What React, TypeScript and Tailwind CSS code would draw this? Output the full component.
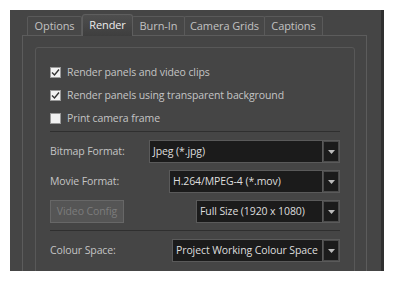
import React from "react";

const font = { fontFamily: '"Open Sans", "Noto Sans", sans-serif', letterSpacing: "-0.1px" };

function Arrow() {
  return (
    <svg width="7" height="4" viewBox="0 0 7 4">
      <polygon points="0,0 7,0 3.5,4" fill="#bdbdbd" />
    </svg>
  );
}

function Combo({ text, w }: { text: string; w: string }) {
  return (
    <div className={`flex h-[23px] ${w} bg-[#5a5a5a] p-[1px] gap-[1px]`}>
      <div className="flex-1 bg-[#1b1b1b] flex items-center pl-[3px] text-[10.5px] text-[#dedede] whitespace-nowrap overflow-hidden">
        {text}
      </div>
      <div className="w-[16px] bg-[#1b1b1b] border border-[#4a4a4a] flex items-center justify-center">
        <Arrow />
      </div>
    </div>
  );
}

function Check({ checked, label }: { checked: boolean; label: string }) {
  return (
    <div className="flex items-center h-[23px] gap-[6px]">
      <div className="w-[11px] h-[11px] bg-[#f2f2f2] border border-[#9a9a9a] flex items-center justify-center">
        {checked && (
          <svg width="9" height="9" viewBox="0 0 9 9">
            <polyline points="1,4.5 3.5,7 8,1.5" fill="none" stroke="#333" strokeWidth="1.4" />
          </svg>
        )}
      </div>
      <span className="text-[10.5px] text-[#c4c4c4] whitespace-nowrap">{label}</span>
    </div>
  );
}

const tabs = [
  { name: "Options", w: "w-[55px]" },
  { name: "Render", w: "w-[51px]", active: true },
  { name: "Burn-In", w: "w-[53px]" },
  { name: "Camera Grids", w: "w-[81px]" },
  { name: "Captions", w: "w-[59px]" },
];

export default function App() {
  return (
    <div className="w-[394px] h-[281px] bg-white p-[10px]" style={font}>
      <div className="w-[374px] h-[261px] bg-[#454545] border-r-[3px] border-[#2f2f2f] overflow-hidden pl-[12px] pt-[3px]">
        <div className="flex items-end h-[22px] pl-[5px]">
          {tabs.map((t) =>
            t.active ? (
              <div
                key={t.name}
                className={`${t.w} h-[22px] -mb-[1px] relative z-10 rounded-t-[3px] border border-b-0 border-[#5e5e5e] bg-gradient-to-b from-[#4e4e4e] to-[#3e3e3e] flex items-center justify-center text-[11px] text-[#ececec]`}
              >
                {t.name}
              </div>
            ) : (
              <div
                key={t.name}
                className={`${t.w} h-[19px] rounded-t-[2px] border border-b-0 border-[#5a5a5a] -ml-[1px] first:ml-0 bg-[#474747] flex items-center justify-center text-[11px] text-[#c2c2c2]`}
              >
                {t.name}
              </div>
            )
          )}
        </div>
        <div className="w-[345px] h-[300px] border border-[#5c5c5c] pl-[12px] pt-[11px]">
          <div className="w-[320px] h-[300px] border border-[#585858] rounded-[3px] px-[14px] pt-[13px]">
            <Check checked label="Render panels and video clips" />
            <Check checked label="Render panels using transparent background" />
            <Check checked={false} label="Print camera frame" />
            <div className="h-[1px] bg-[#2f2f2f] mt-[1px]" />
            <div className="flex flex-col gap-[7px] pt-[8px]">
              <div className="flex items-center justify-between h-[23px]">
                <span className="text-[10.5px] text-[#c4c4c4]">Bitmap Format:</span>
                <Combo text="Jpeg (*.jpg)" w="w-[191px]" />
              </div>
              <div className="flex items-center justify-between h-[23px]">
                <span className="text-[10.5px] text-[#c4c4c4]">Movie Format:</span>
                <Combo text="H.264/MPEG-4 (*.mov)" w="w-[171px]" />
              </div>
              <div className="flex items-center justify-between h-[23px]">
                <div className="w-[74px] h-[23px] bg-[#555555] border border-[#676767] flex items-center justify-center text-[10.5px] text-[#7c7c7c]">
                  Video Config
                </div>
                <Combo text="Full Size (1920 x 1080)" w="w-[144px]" />
              </div>
            </div>
            <div className="h-[1px] bg-[#2f2f2f] mt-[7px]" />
            <div className="flex items-center justify-between h-[23px] mt-[8px]">
              <span className="text-[10.5px] text-[#c4c4c4]">Colour Space:</span>
              <Combo text="Project Working Colour Space" w="w-[168px]" />
            </div>
          </div>
        </div>
      </div>
    </div>
  );
}
